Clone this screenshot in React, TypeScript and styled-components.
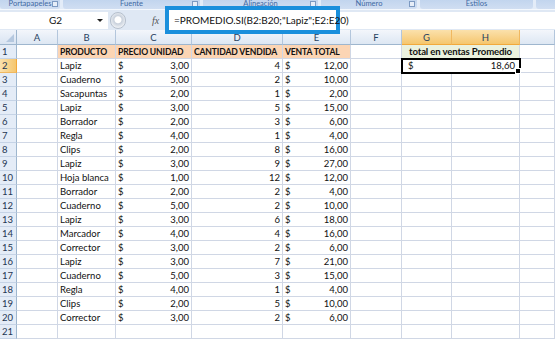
import styled, { createGlobalStyle } from "styled-components";

const GlobalStyle = createGlobalStyle`
  body {
    margin: 0;
    background: #ffffff;
    font-family: Lato, "Open Sans", "Liberation Sans", sans-serif;
  }
`;

const Screen = styled.div`
  width: 555px;
  height: 340px;
  overflow: hidden;
  background: #fff;
`;

// ribbon strip with the group captions
const Ribbon = styled.div`
  display: flex;
  height: 9px;
  gap: 3px;
  background: #e3ecf8;
  overflow: hidden;
`;

const RibbonGroup = styled.div<{ $w: number }>`
  position: relative;
  flex: 0 0 ${(p) => p.$w}px;
  height: 9px;
  background: linear-gradient(#c2d5ee, #d0def2);
  border-radius: 0 0 3px 3px;
  color: #3f69a3;
  font-size: 7.5px;
  line-height: 8px;
  text-align: center;
`;

const Launcher = styled.span`
  position: absolute;
  right: 2px;
  top: 1px;
  width: 4px;
  height: 4px;
  border: 1px solid #7d9ac2;
  background: #e7eef8;
`;

const FormulaBar = styled.div`
  display: flex;
  align-items: center;
  height: 21px;
  background: #dfe8f4;
  border-top: 1px solid #f4f8fd;
  box-sizing: border-box;
`;

const NameBox = styled.div`
  width: 108px;
  height: 17px;
  display: flex;
  align-items: center;
  background: #fff;
  font-size: 10px;
  color: #111;
`;

const NameText = styled.span`
  flex: 1;
  text-align: center;
  padding-left: 14px;
`;

const DropArrow = styled.span`
  width: 0;
  height: 0;
  margin-right: 5px;
  border-left: 3px solid transparent;
  border-right: 3px solid transparent;
  border-top: 3px solid #222;
`;

const Knob = styled.div`
  width: 16px;
  height: 17px;
  border-radius: 9px;
  margin-left: 2px;
  background: radial-gradient(circle at 50% 45%, #ffffff 0 3px, #c9d1dc 4px, #eef1f5 8px);
  border: 1px solid #b6c0cd;
  box-sizing: border-box;
`;

const Fx = styled.span`
  margin-left: 26px;
  width: 13px;
  font-family: "Liberation Serif", serif;
  font-style: italic;
  font-size: 10px;
  color: #555;
`;

const FormulaField = styled.div`
  flex: 1;
  height: 17px;
  display: flex;
  align-items: center;
  background: #fff;
`;

const Highlight = styled.div`
  position: relative;
  z-index: 2;
  width: 175px;
  height: 28px;
  box-sizing: border-box;
  border: 4px solid #1a8fdc;
  background: #fff;
  display: flex;
  align-items: center;
  padding-left: 5px;
  font-size: 10px;
  color: #111;
  white-space: nowrap;
`;

const Sheet = styled.div`
  display: grid;
  grid-template-columns: 17px 41px 58px 76px 91px 68px 51px 50px 68px 1fr;
  grid-template-rows: 15px repeat(21, 14px);
  font-size: 9.5px;
  color: #111;
`;

const Corner = styled.div`
  background: linear-gradient(#eef3fa, #d9e4f2);
  border-right: 1px solid #9eb6ce;
  border-bottom: 1px solid #9eb6ce;
  position: relative;
  &::after {
    content: "";
    position: absolute;
    right: 2px;
    bottom: 2px;
    border-left: 8px solid transparent;
    border-bottom: 8px solid #b5c8df;
  }
`;

const ColHead = styled.div<{ $sel?: boolean }>`
  display: flex;
  align-items: center;
  justify-content: center;
  background: ${(p) =>
    p.$sel ? "linear-gradient(#fbe1ac, #f5c66e)" : "linear-gradient(#f3f6fb, #dde7f3)"};
  border-right: 1px solid ${(p) => (p.$sel ? "#f0b860" : "#b3c6dc")};
  border-bottom: 1px solid ${(p) => (p.$sel ? "#f2a93b" : "#9eb6ce")};
  color: #27415f;
`;

const RowHead = styled.div<{ $sel?: boolean }>`
  display: flex;
  align-items: center;
  padding-left: 2px;
  background: ${(p) => (p.$sel ? "linear-gradient(90deg, #fbe1ac, #f5c66e)" : "#e4ecf7")};
  border-right: 1px solid ${(p) => (p.$sel ? "#f2a93b" : "#9eb6ce")};
  border-bottom: 1px solid ${(p) => (p.$sel ? "#f0b860" : "#c5d3e6")};
  color: #1e3552;
`;

const Cell = styled.div<{
  $fill?: string;
  $bold?: boolean;
  $size?: number;
  $align?: string;
  $span?: number;
}>`
  display: flex;
  align-items: center;
  justify-content: ${(p) => p.$align || "flex-start"};
  padding: 0 2px;
  overflow: hidden;
  white-space: nowrap;
  grid-column: span ${(p) => p.$span || 1};
  background: ${(p) => p.$fill || "#fff"};
  font-weight: ${(p) => (p.$bold ? 700 : 400)};
  font-size: ${(p) => (p.$size ? `${p.$size}px` : p.$bold ? "8.6px" : "inherit")};
  letter-spacing: ${(p) => (p.$bold ? "-0.15px" : "normal")};
  border-right: 1px solid #d0d7e5;
  border-bottom: 1px solid #d0d7e5;
`;

const Money = styled(Cell)`
  justify-content: space-between;
`;

const Active = styled(Money)`
  position: relative;
  overflow: visible;
  outline: 2px solid #000;
  outline-offset: -1px;
  padding: 0 4px 0 6px;
  &::after {
    content: "";
    position: absolute;
    right: -2px;
    bottom: -2px;
    width: 4px;
    height: 4px;
    background: #000;
    border: 1px solid #fff;
  }
`;

const groups = [
  { label: "Portapapeles", w: 60, launcher: true },
  { label: "Fuente", w: 137, launcher: true },
  { label: "Alineación", w: 115, launcher: true },
  { label: "Número", w: 96, launcher: true },
  { label: "Estilos", w: 113, launcher: false },
  { label: "", w: 40, launcher: false },
];

const columns = ["A", "B", "C", "D", "E", "F", "G", "H", ""];

const rows: [string, string, number, string][] = [
  ["Lapiz", "3,00", 4, "12,00"],
  ["Cuaderno", "5,00", 2, "10,00"],
  ["Sacapuntas", "2,00", 1, "2,00"],
  ["Lapiz", "3,00", 5, "15,00"],
  ["Borrador", "2,00", 3, "6,00"],
  ["Regla", "4,00", 1, "4,00"],
  ["Clips", "2,00", 8, "16,00"],
  ["Lapiz", "3,00", 9, "27,00"],
  ["Hoja blanca", "1,00", 12, "12,00"],
  ["Borrador", "2,00", 2, "4,00"],
  ["Cuaderno", "5,00", 2, "10,00"],
  ["Lapiz", "3,00", 6, "18,00"],
  ["Marcador", "4,00", 4, "16,00"],
  ["Corrector", "3,00", 2, "6,00"],
  ["Lapiz", "3,00", 7, "21,00"],
  ["Cuaderno", "5,00", 3, "15,00"],
  ["Regla", "4,00", 1, "4,00"],
  ["Clips", "2,00", 5, "10,00"],
  ["Corrector", "3,00", 2, "6,00"],
];

const peach = "#fcd5b4";
const green = "#ebf1de";

const Empty = ({ n }: { n: number }) => (
  <>
    {Array.from({ length: n }).map((_, i) => (
      <Cell key={i} />
    ))}
  </>
);

const Row = ({ n, data }: { n: number; data: [string, string, number, string] }) => {
  const [product, price, qty, total] = data;
  return (
    <>
      <RowHead $sel={n === 2}>{n}</RowHead>
      <Cell />
      <Cell>{product}</Cell>
      <Money>
        <span>$</span>
        <span>{price}</span>
      </Money>
      <Cell $align="flex-end">{qty}</Cell>
      <Money>
        <span>$</span>
        <span>{total}</span>
      </Money>
      <Cell />
      {n === 2 ? (
        <Active $span={2}>
          <span>$</span>
          <span>18,60</span>
        </Active>
      ) : (
        <Empty n={2} />
      )}
      <Cell />
    </>
  );
};

const App = () => {
  return (
    <Screen>
      <GlobalStyle />
      <Ribbon>
        {groups.map((g, i) => (
          <RibbonGroup key={i} $w={g.w}>
            {g.label}
            {g.launcher && <Launcher />}
          </RibbonGroup>
        ))}
      </Ribbon>

      <FormulaBar>
        <NameBox>
          <NameText>G2</NameText>
          <DropArrow />
        </NameBox>
        <Knob />
        <Fx>fx</Fx>
        <FormulaField>
          <Highlight>=PROMEDIO.SI(B2:B20;"Lapiz";E2:E20)</Highlight>
        </FormulaField>
      </FormulaBar>

      <Sheet>
        <Corner />
        {columns.map((c, i) => (
          <ColHead key={i} $sel={c === "G" || c === "H"}>
            {c}
          </ColHead>
        ))}

        {/* row 1: titles */}
        <RowHead>1</RowHead>
        <Cell />
        <Cell $fill={peach} $bold>PRODUCTO</Cell>
        <Cell $fill={peach} $bold>PRECIO UNIDAD</Cell>
        <Cell $fill={peach} $bold>CANTIDAD VENDIDA</Cell>
        <Cell $fill={peach} $bold>VENTA TOTAL</Cell>
        <Cell />
        <Cell $fill={green} $bold $size={9.6} $span={2} $align="center">
          total en ventas Promedio
        </Cell>
        <Cell />

        {rows.map((r, i) => (
          <Row key={i} n={i + 2} data={r} />
        ))}

        <RowHead>21</RowHead>
        <Empty n={9} />
      </Sheet>
    </Screen>
  );
};

export default App;
